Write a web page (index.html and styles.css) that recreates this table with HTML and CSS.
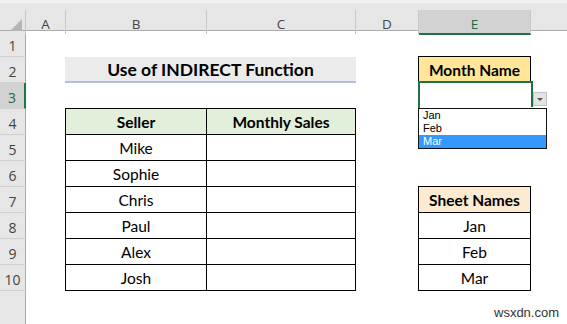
FILE: index.html
```html
<!DOCTYPE html>
<html>
<head>
<meta charset="utf-8">
<link rel="stylesheet" href="styles.css">
</head>
<body>
<div class="app">
  <div class="topbar"></div>
  <div class="colheads">
    <div class="corner"><span class="tri"></span></div>
    <div class="ch">A</div>
    <div class="ch">B</div>
    <div class="ch">C</div>
    <div class="ch">D</div>
    <div class="ch sel">E</div>
    <div class="ch rest"></div>
  </div>
  <div class="main">
    <div class="rowheads">
      <div class="rh">1</div>
      <div class="rh">2</div>
      <div class="rh sel">3</div>
      <div class="rh">4</div>
      <div class="rh">5</div>
      <div class="rh">6</div>
      <div class="rh">7</div>
      <div class="rh">8</div>
      <div class="rh">9</div>
      <div class="rh">10</div>
      <div class="rh filler"></div>
    </div>
    <div class="cells">
      <div class="title">Use of INDIRECT Function</div>

      <div class="data">
        <div class="c hd">Seller</div><div class="c hd">Monthly Sales</div>
        <div class="c">Mike</div><div class="c"></div>
        <div class="c">Sophie</div><div class="c"></div>
        <div class="c">Chris</div><div class="c"></div>
        <div class="c">Paul</div><div class="c"></div>
        <div class="c">Alex</div><div class="c"></div>
        <div class="c">Josh</div><div class="c"></div>
      </div>

      <div class="month">Month Name</div>

      <div class="active">
        <div class="sel-frame"></div>
        <div class="handle"></div>
        <div class="dd-btn"><span class="dd-arrow"></span></div>
        <div class="dd-list">
          <div class="dd-item">Jan</div>
          <div class="dd-item">Feb</div>
          <div class="dd-item on">Mar</div>
        </div>
      </div>

      <div class="names">
        <div class="c hd2">Sheet Names</div>
        <div class="c">Jan</div>
        <div class="c">Feb</div>
        <div class="c">Mar</div>
      </div>
    </div>
  </div>
  <div class="mark">wsxdn.com</div>
</div>
</body>
</html>
```
FILE: styles.css
```css
* { box-sizing: border-box; }

body {
  margin: 0;
  width: 567px;
  height: 324px;
  overflow: hidden;
  background: #ffffff;
  font-family: Lato, "Liberation Sans", sans-serif;
  color: #000;
}

.app {
  position: relative;
  width: 567px;
  height: 324px;
}

.topbar {
  height: 10px;
  background: #e6e6e6;
  border-top: 3px solid #f0f0f0;
}

.colheads {
  display: grid;
  grid-template-columns: 26px 40px 141px 149px 63px 112px 1fr;
  height: 21px;
  background: #e6e6e6;
  border-bottom: 1px solid #ababab;
}

.corner {
  border-right: 1px solid #c8c8c8;
  position: relative;
}

.tri {
  position: absolute;
  right: 3px;
  bottom: 3px;
  width: 12px;
  height: 12px;
  background: #b5b5b5;
  clip-path: polygon(100% 0, 100% 100%, 0 100%);
}

.ch {
  border-right: 1px solid #c8c8c8;
  display: flex;
  align-items: center;
  justify-content: center;
  font-family: "Open Sans", "Liberation Sans", sans-serif;
  font-size: 13.5px;
  color: #444;
  padding-top: 4px;
}

.ch.sel {
  background: #d2d2d2;
  color: #1f6b41;
  border-bottom: 2px solid #217346;
  margin-bottom: -1px;
  padding-top: 5px;
}

.ch.rest { border-right: none; }

.main {
  display: flex;
  height: 293px;
}

.rowheads {
  flex: none;
  width: 26px;
  display: flex;
  flex-direction: column;
  background: #e6e6e6;
}

.rh {
  height: 26px;
  border-bottom: 1px solid #cfcfcf;
  border-right: 1px solid #ababab;
  display: flex;
  align-items: center;
  justify-content: center;
  font-family: "Open Sans", "Liberation Sans", sans-serif;
  font-size: 14px;
  color: #444;
  padding-top: 3px;
}

.rh.sel {
  background: #d2d2d2;
  color: #1f6b41;
  border-right: 2px solid #217346;
}

.rh.filler {
  flex: 1;
  border-bottom: none;
}

.cells {
  flex: 1;
  display: grid;
  grid-template-columns: 40px 141px 149px 63px 112px 1fr;
  grid-template-rows: repeat(10, 26px) 1fr;
}

.title {
  grid-column: 2 / 4;
  grid-row: 2;
  margin-left: -1px;
  background: #ebebeb;
  border-bottom: 2px solid #aec0e2;
  display: flex;
  align-items: center;
  justify-content: center;
  font-weight: 700;
  font-size: 17.5px;
  padding-top: 1px;
}

.data {
  grid-column: 2 / 4;
  grid-row: 4 / 11;
  margin: -1px 0 0 -1px;
  display: grid;
  grid-template-columns: 141px 149px;
  grid-template-rows: repeat(7, 26px);
  border-left: 1px solid #000;
  border-top: 1px solid #000;
}

.c {
  border-right: 1px solid #000;
  border-bottom: 1px solid #000;
  display: flex;
  align-items: center;
  justify-content: center;
  font-size: 15.5px;
  padding-top: 1px;
}

.hd {
  background: #e2efda;
  font-weight: 700;
  font-size: 15.5px;
}

.month {
  grid-column: 5;
  grid-row: 2;
  margin: -1px 0 0 -1px;
  border: 1px solid #000;
  background: #ffe699;
  display: flex;
  align-items: center;
  justify-content: center;
  font-weight: 700;
  font-size: 15.5px;
  padding-top: 1px;
}

.active {
  grid-column: 5;
  grid-row: 3;
  position: relative;
}

.sel-frame {
  position: absolute;
  left: -1px;
  top: -2px;
  right: -2px;
  bottom: -2px;
  border: 2px solid #217346;
}

.handle {
  position: absolute;
  right: -4px;
  bottom: -4px;
  width: 6px;
  height: 6px;
  background: #217346;
  border: 1px solid #fff;
}

.dd-btn {
  position: absolute;
  left: 114px;
  top: 9px;
  width: 14px;
  height: 14px;
  background: #e4e4e4;
  border: 1px solid #c2c2c2;
  display: flex;
  align-items: center;
  justify-content: center;
}

.dd-arrow {
  width: 0;
  height: 0;
  border-left: 3px solid transparent;
  border-right: 3px solid transparent;
  border-top: 3px solid #555;
}

.dd-list {
  position: absolute;
  left: -1px;
  top: 25px;
  width: 129px;
  height: 41px;
  background: #fff;
  border: 1px solid #111;
  z-index: 2;
}

.dd-item {
  height: 13px;
  line-height: 13px;
  padding-left: 4px;
  font-family: "Liberation Sans", Arial, sans-serif;
  font-size: 11px;
  color: #000;
}

.dd-item.on {
  background: #3399ff;
  color: #fff;
}

.names {
  grid-column: 5;
  grid-row: 7 / 11;
  margin: -1px 0 0 -1px;
  display: grid;
  grid-template-rows: repeat(4, 26px);
  border-left: 1px solid #000;
  border-top: 1px solid #000;
}

.hd2 {
  background: #fcebd0;
  font-weight: 700;
}

.mark {
  position: absolute;
  left: 494px;
  top: 305px;
  font-family: "Liberation Sans", Arial, sans-serif;
  font-size: 13px;
  color: #333;
}
```
